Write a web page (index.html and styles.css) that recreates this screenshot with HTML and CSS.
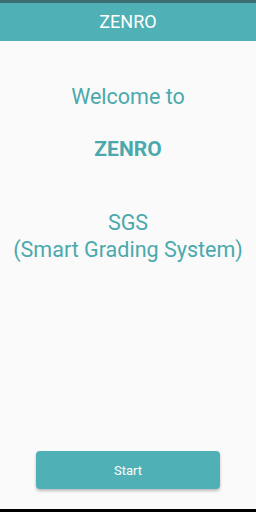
FILE: index.html
```html
<!DOCTYPE html>
<html lang="en">
<head>
    <meta charset="UTF-8">
    <title>ZENRO</title>
    <link rel="stylesheet" href="styles.css">
</head>
<body>
<div class="screen">
    <div class="status"></div>
    <div class="toolbar">ZENRO</div>
    <div class="content">
        <p class="welcome">Welcome to</p>
        <p class="brand">ZENRO</p>
        <p class="sgs">SGS<br>(Smart Grading System)</p>
    </div>
    <div class="bottom">
        <button class="start">Start</button>
    </div>
    <div class="navbar"></div>
</div>
</body>
</html>
```

FILE: styles.css
```css
* {
    margin: 0;
    padding: 0;
}

body {
    font-family: Roboto, "Noto Sans", sans-serif;
    background-color: #fafafa;
}

.screen {
    width: 256px;
    height: 512px;
    display: flex;
    flex-direction: column;
}

.status {
    height: 3px;
    background-color: #3c6f72;
}

.toolbar {
    height: 38px;
    line-height: 38px;
    background-color: #4fb0b5;
    color: #ffffff;
    font-size: 18px;
    text-align: center;
}

.content {
    flex: 1;
    text-align: center;
    color: #4aa9ad;
    padding-top: 44px;
}

.welcome {
    font-size: 21.5px;
    line-height: 24px;
}

.brand {
    font-size: 21px;
    font-weight: bold;
    line-height: 24px;
    margin-top: 28px;
}

.sgs {
    font-size: 21.5px;
    line-height: 27px;
    margin-top: 48px;
}

.bottom {
    display: flex;
    justify-content: center;
    padding-bottom: 20px;
}

.start {
    width: 184px;
    height: 38px;
    border: none;
    border-radius: 4px;
    background-color: #4fb0b5;
    color: #ffffff;
    font-family: Roboto, "Noto Sans", sans-serif;
    font-size: 13px;
    box-shadow: 0 2px 3px rgba(0, 0, 0, 0.25);
}

.navbar {
    height: 3px;
    background-color: #000000;
}
```
